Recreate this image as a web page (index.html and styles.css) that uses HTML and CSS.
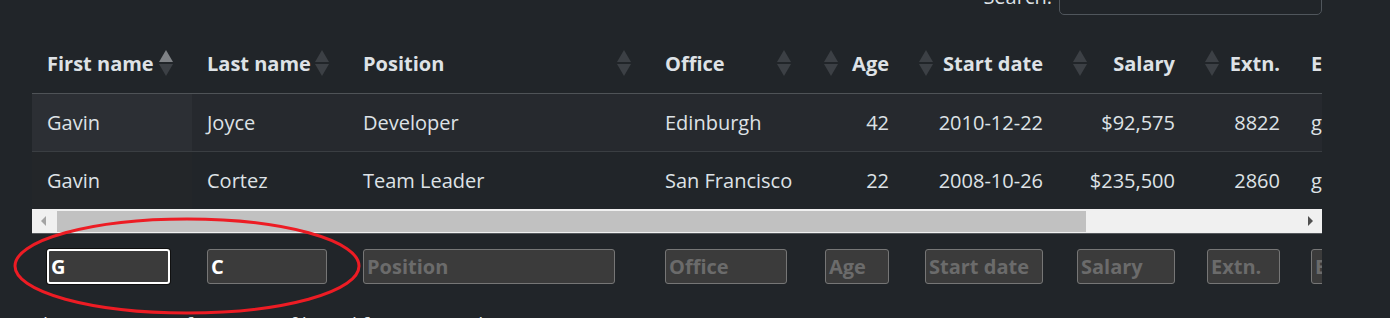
FILE: index.html
```html
<!DOCTYPE html>
<html>
<head>
<meta charset="utf-8">
<link rel="stylesheet" href="styles.css">
</head>
<body>
<div class="page">
  <div class="toolbar">
    <label class="search-label">Search:</label>
    <div class="search-input"></div>
  </div>

  <div class="scroll-body">
    <table class="grid">
      <colgroup>
        <col class="c1"><col class="c2"><col class="c3"><col class="c4"><col class="c5"><col class="c6"><col class="c7"><col class="c8"><col class="c9">
      </colgroup>
      <thead>
        <tr>
          <th><div class="th-in"><span>First name</span><svg class="sort" width="14" height="26" viewBox="0 0 14 26"><path d="M7 0 L14 12 L0 12 Z" fill="#7f8286"/><path d="M0 14 L14 14 L7 26 Z" fill="#3c4045"/></svg></div></th>
          <th><div class="th-in"><span>Last name</span><svg class="sort" width="14" height="26" viewBox="0 0 14 26"><path d="M7 0 L14 12 L0 12 Z" fill="#3c4045"/><path d="M0 14 L14 14 L7 26 Z" fill="#3c4045"/></svg></div></th>
          <th><div class="th-in"><span>Position</span><svg class="sort" width="14" height="26" viewBox="0 0 14 26"><path d="M7 0 L14 12 L0 12 Z" fill="#3c4045"/><path d="M0 14 L14 14 L7 26 Z" fill="#3c4045"/></svg></div></th>
          <th><div class="th-in"><span>Office</span><svg class="sort" width="14" height="26" viewBox="0 0 14 26"><path d="M7 0 L14 12 L0 12 Z" fill="#3c4045"/><path d="M0 14 L14 14 L7 26 Z" fill="#3c4045"/></svg></div></th>
          <th><div class="th-in num"><span>Age</span><svg class="sort" width="14" height="26" viewBox="0 0 14 26"><path d="M7 0 L14 12 L0 12 Z" fill="#3c4045"/><path d="M0 14 L14 14 L7 26 Z" fill="#3c4045"/></svg></div></th>
          <th><div class="th-in num"><span>Start date</span><svg class="sort" width="14" height="26" viewBox="0 0 14 26"><path d="M7 0 L14 12 L0 12 Z" fill="#3c4045"/><path d="M0 14 L14 14 L7 26 Z" fill="#3c4045"/></svg></div></th>
          <th><div class="th-in num"><span>Salary</span><svg class="sort" width="14" height="26" viewBox="0 0 14 26"><path d="M7 0 L14 12 L0 12 Z" fill="#3c4045"/><path d="M0 14 L14 14 L7 26 Z" fill="#3c4045"/></svg></div></th>
          <th><div class="th-in num"><span>Extn.</span><svg class="sort" width="14" height="26" viewBox="0 0 14 26"><path d="M7 0 L14 12 L0 12 Z" fill="#3c4045"/><path d="M0 14 L14 14 L7 26 Z" fill="#3c4045"/></svg></div></th>
          <th><div class="th-in"><span>E-mail</span></div></th>
        </tr>
      </thead>
      <tbody>
        <tr class="odd">
          <td class="sorted">Gavin</td><td>Joyce</td><td>Developer</td><td>Edinburgh</td><td class="r">42</td><td class="r">2010-12-22</td><td class="r">$92,575</td><td class="r">8822</td><td>g.joyce@datatables.net</td>
        </tr>
        <tr class="even">
          <td class="sorted">Gavin</td><td>Cortez</td><td>Team Leader</td><td>San Francisco</td><td class="r">22</td><td class="r">2008-10-26</td><td class="r">$235,500</td><td class="r">2860</td><td>g.cortez@datatables.net</td>
        </tr>
      </tbody>
    </table>
  </div>

  <div class="hscroll">
    <div class="sb-btn"><span class="arrow-l"></span></div>
    <div class="sb-thumb"></div>
    <div class="sb-track"></div>
    <div class="sb-btn"><span class="arrow-r"></span></div>
  </div>

  <div class="scroll-foot">
    <table class="grid">
      <colgroup>
        <col class="c1"><col class="c2"><col class="c3"><col class="c4"><col class="c5"><col class="c6"><col class="c7"><col class="c8"><col class="c9">
      </colgroup>
      <tfoot>
        <tr>
          <td><div class="filter focused w1">G</div></td>
          <td><div class="filter w2">C</div></td>
          <td><div class="filter ph w3">Position</div></td>
          <td><div class="filter ph w4">Office</div></td>
          <td class="r"><div class="filter ph w5">Age</div></td>
          <td class="r"><div class="filter ph w6">Start date</div></td>
          <td class="r"><div class="filter ph w7">Salary</div></td>
          <td class="r"><div class="filter ph w8">Extn.</div></td>
          <td><div class="filter ph w9">E-mail</div></td>
        </tr>
      </tfoot>
    </table>
  </div>

  <div class="info">Showing 1 to 2 of 2 entries (filtered from 57 total entries)</div>
</div>

<svg class="annotation" width="380" height="110" viewBox="0 0 380 110">
  <ellipse cx="187" cy="49" rx="172" ry="47" fill="none" stroke="#ed1c24" stroke-width="3"/>
</svg>
</body>
</html>
```

FILE: styles.css
```css
html, body {
  margin: 0;
  padding: 0;
  background: #212529;
  height: 100%;
  overflow: hidden;
}

body {
  position: relative;
  color: #dee2e6;
  font-family: "Open Sans", "Noto Sans", sans-serif;
  font-size: 20px;
}

.page {
  width: 1290px;
  padding-left: 32px;
}

.toolbar {
  display: flex;
  justify-content: flex-end;
  align-items: center;
  gap: 7px;
  height: 38px;
  margin-top: -23px;
}

.search-label {
  color: #dee2e6;
}

.search-input {
  width: 261px;
  height: 36px;
  border: 1px solid #50565c;
  border-radius: 5px;
}

.scroll-body,
.scroll-foot {
  width: 1290px;
  overflow: hidden;
}

.scroll-body {
  margin-top: 20px;
}

.grid {
  border-collapse: collapse;
  table-layout: fixed;
  width: 1514px;
}

.c1 { width: 160px; }
.c2 { width: 156px; }
.c3 { width: 302px; }
.c4 { width: 160px; }
.c5 { width: 95px; }
.c6 { width: 154px; }
.c7 { width: 132px; }
.c8 { width: 105px; }
.c9 { width: 250px; }

th {
  height: 56px;
  padding: 0 0 2px;
  font-weight: 700;
  text-align: left;
  border-bottom: 1px solid #4f5357;
  white-space: nowrap;
}

.th-in {
  display: flex;
  align-items: center;
  justify-content: space-between;
  padding: 0 19px 0 15px;
}

.th-in.num {
  flex-direction: row-reverse;
  padding: 0 16px 0 14px;
}

.sort {
  display: block;
  flex: none;
}

td {
  height: 57px;
  padding: 0 16px 0 15px;
  white-space: nowrap;
  overflow: hidden;
}

td.r {
  text-align: right;
}

tbody tr.odd td {
  background: #26292e;
  border-bottom: 1px solid #3a3e42;
}

tbody tr.odd td.sorted {
  background: #2c2f34;
}

tbody tr.even td {
  background: #212529;
}

tbody tr.even td.sorted {
  background: #232629;
}

.hscroll {
  display: flex;
  width: 1290px;
  height: 25px;
  box-sizing: border-box;
  background: #f0f0f0;
  border-bottom: 1px solid #54585c;
}

.sb-btn {
  width: 25px;
  flex: none;
  display: flex;
  align-items: center;
  justify-content: center;
}

.sb-thumb {
  width: 1029px;
  flex: none;
  margin: 2px 0 1px;
  background: #c1c1c1;
}

.sb-track {
  flex: 1;
}

.arrow-l {
  width: 0;
  height: 0;
  border-top: 5px solid transparent;
  border-bottom: 5px solid transparent;
  border-right: 5px solid #a3a3a3;
  margin-right: 2px;
}

.arrow-r {
  width: 0;
  height: 0;
  border-top: 5px solid transparent;
  border-bottom: 5px solid transparent;
  border-left: 5px solid #505050;
  margin-left: 2px;
}

.scroll-foot td {
  height: 64px;
  padding: 0 16px 2px 15px;
}

.filter {
  display: inline-block;
  vertical-align: middle;
  box-sizing: border-box;
  height: 35px;
  line-height: 33px;
  padding: 0 3px;
  text-align: left;
  background: #3b3b3b;
  border: 1px solid #767676;
  border-radius: 3px;
  font-weight: 700;
  color: #ffffff;
  overflow: hidden;
}

.filter.ph {
  color: #6b6b6b;
}

.filter.focused {
  border: 2px solid #ffffff;
  line-height: 31px;
  padding: 0 2px;
  box-shadow: 0 0 0 1px #101010;
}

.w1 { width: 123px; }
.w2 { width: 120px; }
.w3 { width: 252px; }
.w4 { width: 122px; }
.w5 { width: 64px; }
.w6 { width: 118px; }
.w7 { width: 98px; }
.w8 { width: 73px; }
.w9 { width: 200px; }

.info {
  margin-top: 10px;
  line-height: 30px;
}

.annotation {
  position: absolute;
  left: 0;
  top: 217px;
}
```
